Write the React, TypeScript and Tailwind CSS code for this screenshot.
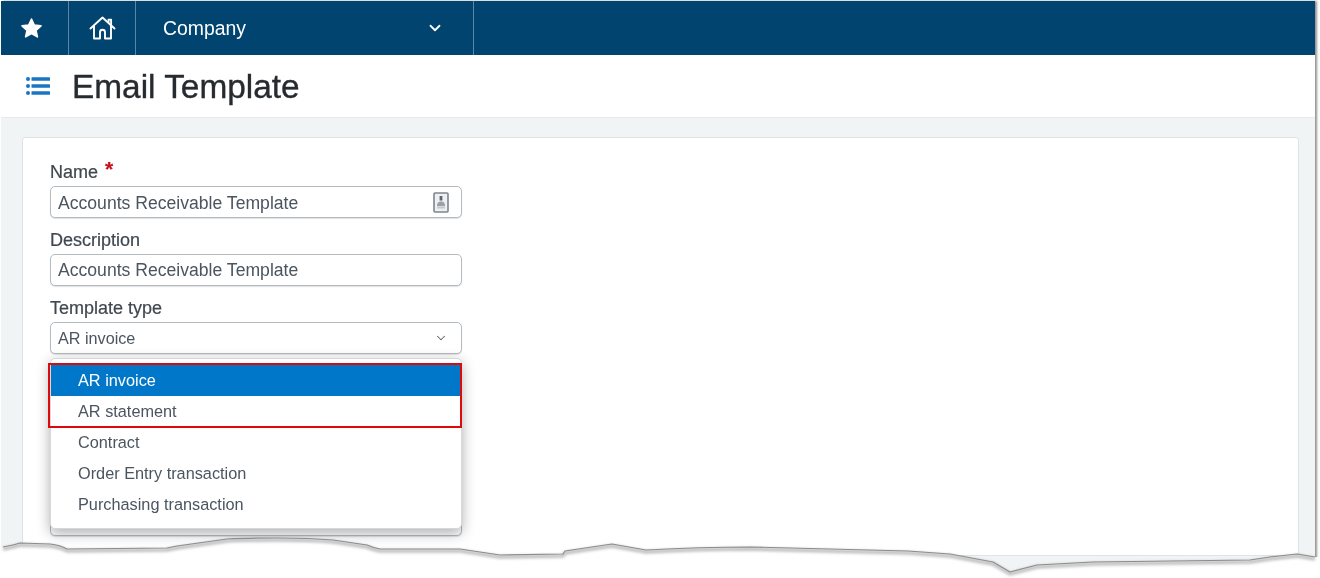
import React from "react";
import { ChevronDown } from "lucide-react";

const font = { fontFamily: '"Liberation Sans", Arial, sans-serif' };

const inputBox =
  "flex h-[32px] w-[412px] items-center justify-between rounded-[5px] border border-[#b4bcc2] bg-white pl-[7px] pr-[12px] text-[17.6px] text-[#4b5560] shadow-[0_1px_1px_rgba(0,0,0,0.12)]";

const tearLine =
  "M3 547L8 546Q14 545 20 543L50 544Q60 545 67 549L167 548Q172 547 177 546L227 539Q245 538 277 538Q310 538 333 540L367 545Q374 548 380 549L460 549L500 555L563 554L565 551L612 544L646 550Q700 547 751 547L908 551L950 554L993 562L1010 572L1037 565L1093 562L1250 560L1270 557L1297 554L1315 557";

const StarIcon = () => (
  <svg width="23" height="22" viewBox="0 0 23 22" fill="white" stroke="white" strokeWidth="1.6" strokeLinejoin="round">
    <path d="M11.5 2l2.8 6 6.7.8-5 4.5 1.4 6.6-5.9-3.3-5.9 3.3 1.4-6.6-5-4.5 6.7-.8z" />
  </svg>
);

const HomeIcon = () => (
  <svg width="27" height="24" viewBox="0 0 27 24" fill="none" stroke="white" strokeWidth="1.9" strokeLinejoin="round" strokeLinecap="round">
    <path d="M1.5 12.5L13.5 1.5l12 11" />
    <path d="M19.5 6.5V3.6h2.6v5.6" />
    <path d="M5 10v12.5h6v-6.2a2.5 2.5 0 015 0v6.2h6V10" />
  </svg>
);

const ListIcon = () => (
  <svg width="24" height="20" viewBox="0 0 24 20" fill="#1a74c4">
    <circle cx="2" cy="3" r="2" />
    <circle cx="2" cy="10" r="2" />
    <circle cx="2" cy="17" r="2" />
    <rect x="5.5" y="1.2" width="18.5" height="3.6" rx="0.6" />
    <rect x="5.5" y="8.2" width="18.5" height="3.6" rx="0.6" />
    <rect x="5.5" y="15.2" width="18.5" height="3.6" rx="0.6" />
  </svg>
);

const ContactIcon = () => (
  <svg width="16" height="21" viewBox="0 0 16 21" fill="none">
    <rect x="1" y="1" width="14" height="19" rx="1" fill="#eef0f1" stroke="#7d868d" strokeWidth="1.6" />
    <rect x="6.6" y="4" width="2.8" height="4.5" fill="#5f6870" />
    <path d="M4 14c0-3.5 1.8-4.4 4-4.4s4 .9 4 4.4z" fill="#9aa1a7" />
    <rect x="4" y="14.5" width="8" height="2" fill="#c4c9cc" />
  </svg>
);

function Field({ label, required, children }: { label: string; required?: boolean; children: React.ReactNode }) {
  return (
    <div className="mb-[10px]">
      <div className="flex h-[26px] items-center pb-[2px] text-[18px] text-[#3f474f] [-webkit-text-stroke:0.2px]">
        {label}
        {required && <span className="relative -top-[4px] ml-[7px] text-[21px] font-bold leading-none text-[#c8101e]">*</span>}
      </div>
      {children}
    </div>
  );
}

const options = ["Contract", "Order Entry transaction", "Purchasing transaction"];

export default function App() {
  return (
    <div className="relative h-[578px] w-[1320px] overflow-hidden bg-white blur-[0.3px]" style={font}>
      <div className="ml-px mt-px flex h-[600px] w-[1314px] flex-col bg-[#f0f4f5] shadow-[2px_0_2px_rgba(90,90,90,0.65)]">
        <div className="flex h-[54px] shrink-0 bg-[#00446f] text-white">
          <div className="flex w-[68px] items-center justify-center border-r border-[#5a87a5] pr-[6px]">
            <StarIcon />
          </div>
          <div className="flex w-[67px] items-center justify-center border-r border-[#5a87a5]">
            <HomeIcon />
          </div>
          <div className="flex w-[338px] items-center justify-between border-r border-[#5a87a5] pl-[27px] pr-[29px] text-[19.4px]">
            <span className="pt-[2px]">Company</span>
            <ChevronDown size={18} strokeWidth={2.4} />
          </div>
        </div>

        <div className="flex h-[63px] shrink-0 items-center border-b border-[#e6ebed] bg-white pl-[25px]">
          <ListIcon />
          <h1 className="ml-[22px] pt-[2px] text-[33.4px] text-[#262b30] [-webkit-text-stroke:0.35px]">Email Template</h1>
        </div>

        <div className="ml-[21px] mr-[16px] mt-[19px] h-[419px] shrink-0 rounded-[3px] border border-[#dde4e7] bg-white px-[27px] pt-[22px]">
          <Field label="Name" required>
            <div className={inputBox}>
              <span className="pt-[3px]">Accounts Receivable Template</span>
              <ContactIcon />
            </div>
          </Field>
          <Field label="Description">
            <div className={inputBox}>Accounts Receivable Template</div>
          </Field>
          <Field label="Template type">
            <div className="relative">
              <div className={inputBox}>
                <span className="text-[16.2px]">AR invoice</span>
                <ChevronDown size={14} strokeWidth={1.8} className="mr-[1px] text-[#59636c]" />
              </div>
              {/* open dropdown list */}
              <div className="absolute left-0 top-[36px] z-10 w-[412px] rounded-[5px] border border-[#d4d9dc] bg-white pb-[8px] pt-[6px] text-[16.3px] text-[#4b5560] shadow-[0_4px_14px_rgba(0,0,0,0.32)]">
                <div className="relative">
                  <div className="flex h-[31px] items-center bg-[#0077c8] pl-[27px] text-white">AR invoice</div>
                  <div className="flex h-[31px] items-center pl-[27px]">AR statement</div>
                  <div className="absolute -left-[3px] -right-[1px] -top-[2px] -bottom-[1px] border-2 border-[#dc0a0a]" />
                </div>
                {options.map((o) => (
                  <div key={o} className="flex h-[31px] items-center pl-[27px]">{o}</div>
                ))}
              </div>
              <div className={`${inputBox} mt-[150px] border-[#9aa2a8]`} />
            </div>
          </Field>
        </div>
      </div>

      {/* torn paper edge */}
      <svg className="absolute left-0 top-0 z-20" width="1320" height="578" viewBox="0 0 1320 578">
        <path d={`${tearLine}L1320 557V578H0V547Z`} fill="white" />
        <path d={tearLine} transform="translate(0 2)" fill="none" stroke="#777" strokeOpacity="0.55" strokeWidth="3" className="blur-[1.5px]" />
        <path d={tearLine} fill="none" stroke="#8c8c8c" strokeWidth="1.2" strokeLinejoin="round" />
      </svg>
    </div>
  );
}
